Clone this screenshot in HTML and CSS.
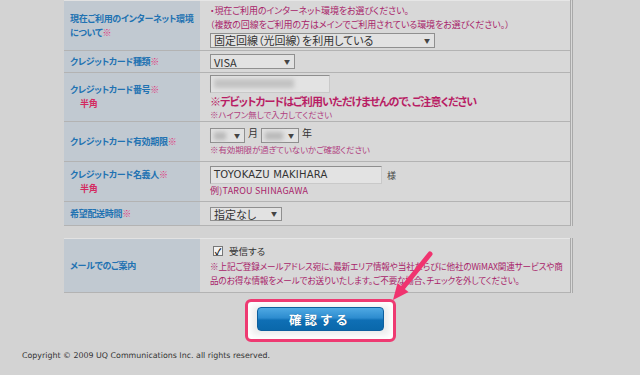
FILE: index.html
```html
<!DOCTYPE html>
<html lang="ja">
<head>
<meta charset="utf-8">
<title>お申し込み</title>
<link rel="stylesheet" href="styles.css">
</head>
<body>
<div class="page">
  <table class="form">
    <tr class="r1">
      <th>現在ご利用のインターネット環境<br>について<span class="req">※</span></th>
      <td>
        <p class="note">・現在ご利用のインターネット環境をお選びください。</p>
        <p class="note">（複数の回線をご利用の方はメインでご利用されている環境をお選びください。）</p>
        <div class="sel sel-net"><span>固定回線（光回線）を利用している</span><i>▼</i></div>
      </td>
    </tr>
    <tr class="r2">
      <th>クレジットカード種類<span class="req">※</span></th>
      <td><div class="sel sel-visa"><span>VISA</span><i>▼</i></div></td>
    </tr>
    <tr class="r3">
      <th>クレジットカード番号<span class="req">※</span><br><span class="half">半角</span></th>
      <td>
        <div class="inp inp-card"><span class="blur"></span></div>
        <p class="warn">※デビットカードはご利用いただけませんので、ご注意ください</p>
        <p class="note small">※ハイフン無しで入力してください</p>
      </td>
    </tr>
    <tr class="r4">
      <th>クレジットカード有効期限<span class="req">※</span></th>
      <td>
        <div class="line">
          <div class="sel sel-m"><span class="blur sm"></span><i>▼</i></div><span class="unit">月</span>
          <div class="sel sel-y"><span class="blur"></span><i>▼</i></div><span class="unit">年</span>
        </div>
        <p class="note small">※有効期限が過ぎていないかご確認ください</p>
      </td>
    </tr>
    <tr class="r5">
      <th>クレジットカード名義人<span class="req">※</span><br><span class="half">半角</span></th>
      <td>
        <div class="line">
          <div class="inp inp-name">TOYOKAZU MAKIHARA</div><span class="sama">様</span>
        </div>
        <p class="note ex">例)TAROU SHINAGAWA</p>
      </td>
    </tr>
    <tr class="r6">
      <th>希望配送時間<span class="req">※</span></th>
      <td><div class="sel sel-time"><span>指定なし</span><i>▼</i></div></td>
    </tr>
  </table>

  <table class="form form2">
    <tr class="r7">
      <th>メールでのご案内</th>
      <td>
        <div class="line check"><span class="cb">✓</span><span class="cbl">受信する</span></div>
        <p class="note mail">※上記ご登録メールアドレス宛に、最新エリア情報や当社ならびに他社のWiMAX関連サービスや商<br>品のお得な情報をメールでお送りいたします。ご不要な場合、チェックを外してください。</p>
      </td>
    </tr>
  </table>

  <div class="submit-row">
    <div class="highlight"><button class="btn" type="button">確認する</button></div>
  </div>
</div>

<p class="copy">Copyright © 2009 UQ Communications Inc. all rights reserved.</p>

<svg class="arrow" width="60" height="60" viewBox="0 0 60 60">
  <line x1="50" y1="9" x2="23" y2="42.5" stroke="#f0336f" stroke-width="5" stroke-linecap="round"/>
  <polygon points="13,55 28.5,47 17.5,38" fill="#f0336f"/>
</svg>
</body>
</html>
```

FILE: styles.css
```css
html, body {
  margin: 0;
  padding: 0;
}
body {
  background: #d3d3d3;
  font-family: "Noto Sans CJK JP", "Noto Sans", sans-serif;
  font-feature-settings: "palt";
  width: 640px;
  height: 375px;
  overflow: hidden;
  position: relative;
}
.page {
  width: 509px;
  margin-left: 64px;
}
p { margin: 0; }

.form {
  width: 509px;
  border-collapse: collapse;
  border-right: 3px double #a9a9a9;
  table-layout: fixed;
}
.form th {
  width: 124px;
  background: #c1c9d1;
  color: #2172b2;
  font-size: 9px;
  font-weight: bold;
  letter-spacing: -0.3px;
  text-align: left;
  padding: 0 6px;
  line-height: 14px;
  vertical-align: middle;
  border-bottom: 1px solid #b3b3b3;
  border-top: 1px solid #e2e2e2;
}
.form td {
  background: #d8d8d8;
  padding: 0 10px;
  vertical-align: middle;
  border-bottom: 1px solid #b3b3b3;
  border-top: 1px solid #e6e6e6;
}
.req { color: #e0307a; }
.half {
  color: #d42a60;
  padding-left: 10px;
}

.r1 { height: 50px; }
.r2 { height: 22px; }
.r3 { height: 49px; }
.r4 { height: 40px; }
.r5 { height: 40px; }
.r6 { height: 24px; }

.note {
  color: #a8246a;
  font-size: 9px;
  line-height: 14px;
  letter-spacing: -0.1px;
}
.note.small { color: #b04080; font-size: 8.5px; line-height: 12px; }
.note.ex { line-height: 13px; letter-spacing: 0.2px; }
.warn {
  color: #b81d64;
  font-size: 11px;
  font-weight: bold;
  line-height: 14px;
  letter-spacing: -0.9px;
  margin-top: 1px;
}

.line {
  display: flex;
  align-items: center;
}
.sel {
  display: flex;
  align-items: center;
  justify-content: space-between;
  box-sizing: border-box;
  height: 15px;
  background: #e2e2e2;
  border: 1px solid #8f8f8f;
  font-size: 11px;
  color: #333;
  padding: 0 4px 0 3px;
}
.sel i {
  font-style: normal;
  font-size: 6px;
  color: #444;
}
.sel-net { width: 225px; margin-top: 1px; }
.sel-visa { width: 85px; }
.sel-m { width: 35px; }
.sel-y { width: 38px; }
.sel-time { width: 72px; height: 14px; }
.unit {
  font-size: 10px;
  color: #333;
  margin: 0 3px 0 3px;
  position: relative;
  top: -3px;
}
.blur {
  display: block;
  width: 18px;
  height: 8px;
  background: #b9b9b9;
  filter: blur(2px);
}
.blur.sm { width: 12px; }

.inp {
  box-sizing: border-box;
  height: 18px;
  background: #e3e3e3;
  border: 1px solid #8e8e8e;
  border-right-color: #c9c9c9;
  border-bottom-color: #c9c9c9;
  font-size: 11px;
  color: #333;
  line-height: 16px;
  padding: 0 3px;
}
.inp-card {
  width: 120px;
  display: flex;
  align-items: center;
}
.inp-card .blur { width: 80px; height: 9px; background: #c2c2c2; }
.inp-name {
  width: 172px;
  font-family: "DejaVu Sans", sans-serif;
  font-size: 10px;
  letter-spacing: 0.2px;
}
.sama {
  font-size: 9px;
  color: #444;
  margin-left: 5px;
}

.form2 { margin-top: 12px; border-top: 1px solid #b3b3b3; }
.r7 { height: 54px; }
.r7 td { padding: 4px 4px 4px 10px; }
.check { margin-bottom: 1px; }
.cb {
  display: inline-flex;
  align-items: center;
  justify-content: center;
  box-sizing: border-box;
  width: 10px;
  height: 10px;
  border: 1px solid #777;
  background: #f2f2f2;
  font-size: 9px;
  line-height: 1;
  color: #111;
  font-weight: bold;
  margin: 0 6px 0 3px;
}
.cbl { font-size: 9.5px; color: #333; }
.note.mail { font-size: 8.6px; line-height: 14px; letter-spacing: -0.15px; white-space: nowrap; }

.submit-row {
  display: flex;
  justify-content: center;
  margin-top: 6px;
  padding-left: 3px;
}
.highlight {
  border: 3px solid #ee3a72;
  border-radius: 6px;
  padding: 5px 9px 8px 9px;
  background: #ececec;
  box-shadow: inset 0 0 6px 4px #ffffff;
}
.btn {
  display: block;
  width: 127px;
  height: 24px;
  border: 1px solid #0d5f9e;
  border-radius: 4px;
  background: linear-gradient(to bottom, #4fa9e3 0%, #2d8ccf 45%, #0f6fb5 55%, #0a68ab 100%);
  color: #fff;
  font-family: "Noto Sans CJK JP", sans-serif;
  font-size: 12.5px;
  font-weight: bold;
  letter-spacing: 3px;
  padding: 0;
  text-shadow: 0 0 1px rgba(0,0,0,0.3);
}

.copy {
  margin: 9px 0 0 22px;
  font-family: "DejaVu Sans", sans-serif;
  font-size: 7.9px;
  color: #333;
}

.arrow {
  position: absolute;
  left: 380px;
  top: 245px;
}
```
